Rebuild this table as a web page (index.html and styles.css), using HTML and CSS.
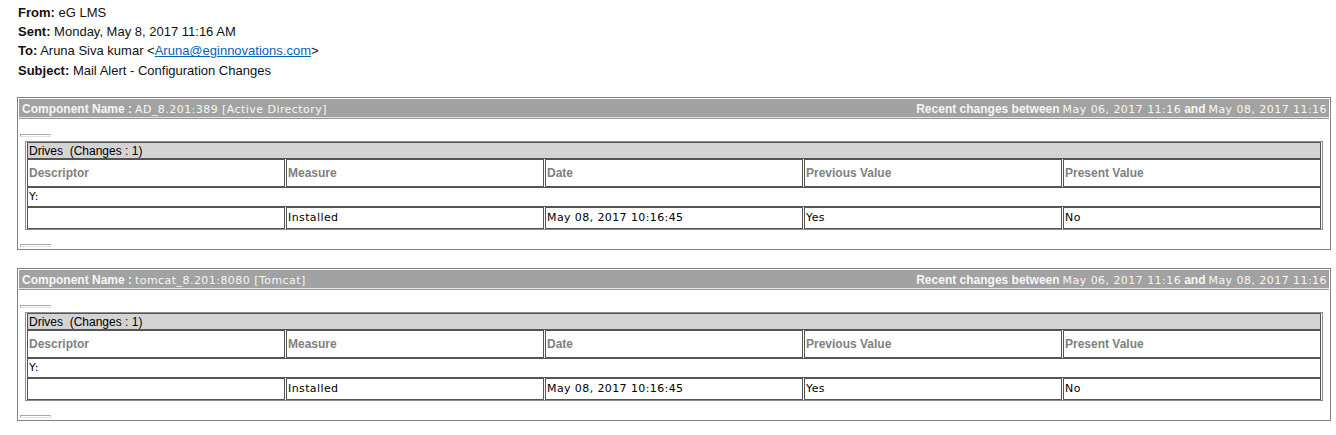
FILE: index.html
```html
<!DOCTYPE html>
<html>
<head>
<meta charset="utf-8">
<link rel="stylesheet" href="styles.css">
</head>
<body>
<div class="mailhead">
  <div><b>From:</b> eG LMS</div>
  <div><b>Sent:</b> Monday, May 8, 2017 11:16 AM</div>
  <div><b>To:</b> Aruna Siva kumar &lt;<a class="mail">Aruna@eginnovations.com</a>&gt;</div>
  <div><b>Subject:</b> Mail Alert - Configuration Changes</div>
</div>

<div class="box">
  <div class="bar">
    <span><b>Component Name :</b> <span class="val">AD_8.201:389 [Active Directory]</span></span>
    <span><b>Recent changes between</b> <span class="val">May 06, 2017 11:16</span> <b>and</b> <span class="val">May 08, 2017 11:16</span></span>
  </div>
  <div class="stub"></div>
  <table class="changes">
    <tr class="cap"><td colspan="5">Drives&nbsp; (Changes : 1)</td></tr>
    <tr class="head"><td>Descriptor</td><td>Measure</td><td>Date</td><td>Previous Value</td><td>Present Value</td></tr>
    <tr class="desc"><td colspan="5">Y:</td></tr>
    <tr class="data"><td></td><td>Installed</td><td>May 08, 2017 10:16:45</td><td>Yes</td><td>No</td></tr>
  </table>
  <div class="stub bottom"></div>
</div>

<div class="box">
  <div class="bar">
    <span><b>Component Name :</b> <span class="val">tomcat_8.201:8080 [Tomcat]</span></span>
    <span><b>Recent changes between</b> <span class="val">May 06, 2017 11:16</span> <b>and</b> <span class="val">May 08, 2017 11:16</span></span>
  </div>
  <div class="stub"></div>
  <table class="changes">
    <tr class="cap"><td colspan="5">Drives&nbsp; (Changes : 1)</td></tr>
    <tr class="head"><td>Descriptor</td><td>Measure</td><td>Date</td><td>Previous Value</td><td>Present Value</td></tr>
    <tr class="desc"><td colspan="5">Y:</td></tr>
    <tr class="data"><td></td><td>Installed</td><td>May 08, 2017 10:16:45</td><td>Yes</td><td>No</td></tr>
  </table>
  <div class="stub bottom"></div>
</div>
</body>
</html>
```

FILE: styles.css
```css
html, body {
  margin: 0;
  padding: 0;
  background: #ffffff;
}

.mailhead {
  padding: 3px 0 0 18px;
  font-family: "Liberation Sans", Arial, sans-serif;
  font-size: 13px;
  line-height: 19.2px;
  color: #111111;
}

.mailhead b {
  font-weight: bold;
}

.mail {
  color: #0563c1;
  text-decoration: underline;
}

.box {
  margin: 17px 5px 18px 17px;
  border: 1px solid #828282;
  padding: 1px 1px 2px 1px;
}

.box + .box {
  margin-top: 0;
}

.bar {
  box-sizing: border-box;
  height: 19px;
  background: #a2a2a2;
  color: #f6f6f6;
  display: flex;
  justify-content: space-between;
  align-items: center;
  padding: 3px 2px 0 3px;
  border-bottom: 1px solid #e4e4e4;
  box-shadow: 0 1px 0 #9a9a9a;
  font-size: 12px;
  white-space: nowrap;
}

.bar b {
  font-family: "Liberation Sans", Arial, sans-serif;
  font-weight: bold;
}

.bar .val {
  font-family: "DejaVu Sans", Verdana, sans-serif;
  font-size: 11px;
  letter-spacing: 0.45px;
}

.stub {
  margin: 16px 0 0 1px;
  width: 29px;
  height: 1px;
  border: 1px solid #a8a8a8;
  border-bottom-color: #e0e0e0;
  border-right-color: #e0e0e0;
}

.stub.bottom {
  margin-top: 14px;
}

.changes {
  margin: 4px 6px 0 6px;
  width: calc(100% - 12px);
  table-layout: fixed;
  border-collapse: separate;
  border-spacing: 1px 0;
  border: 1px solid #8c8c8c;
}

.changes td {
  border: 1px solid #555555;
  padding: 0 1px;
  vertical-align: middle;
  overflow: hidden;
  white-space: nowrap;
}

.cap td {
  height: 14px;
  padding-top: 1px;
  background: #d4d4d4;
  font-family: "Liberation Sans", Arial, sans-serif;
  font-size: 12px;
  line-height: 14px;
  color: #000;
}

.head td {
  height: 26px;
  font-family: "Liberation Sans", Arial, sans-serif;
  font-weight: bold;
  font-size: 12px;
  color: #7f7f7f;
}

.desc td {
  height: 17px;
  padding-top: 1px;
  font-family: "DejaVu Sans", Verdana, sans-serif;
  font-size: 11px;
  line-height: 14px;
  letter-spacing: 0.4px;
  color: #000;
}

.data td {
  height: 19px;
  padding-top: 1px;
  font-family: "DejaVu Sans", Verdana, sans-serif;
  font-size: 11px;
  line-height: 14px;
  letter-spacing: 0.4px;
  color: #000;
}
```
